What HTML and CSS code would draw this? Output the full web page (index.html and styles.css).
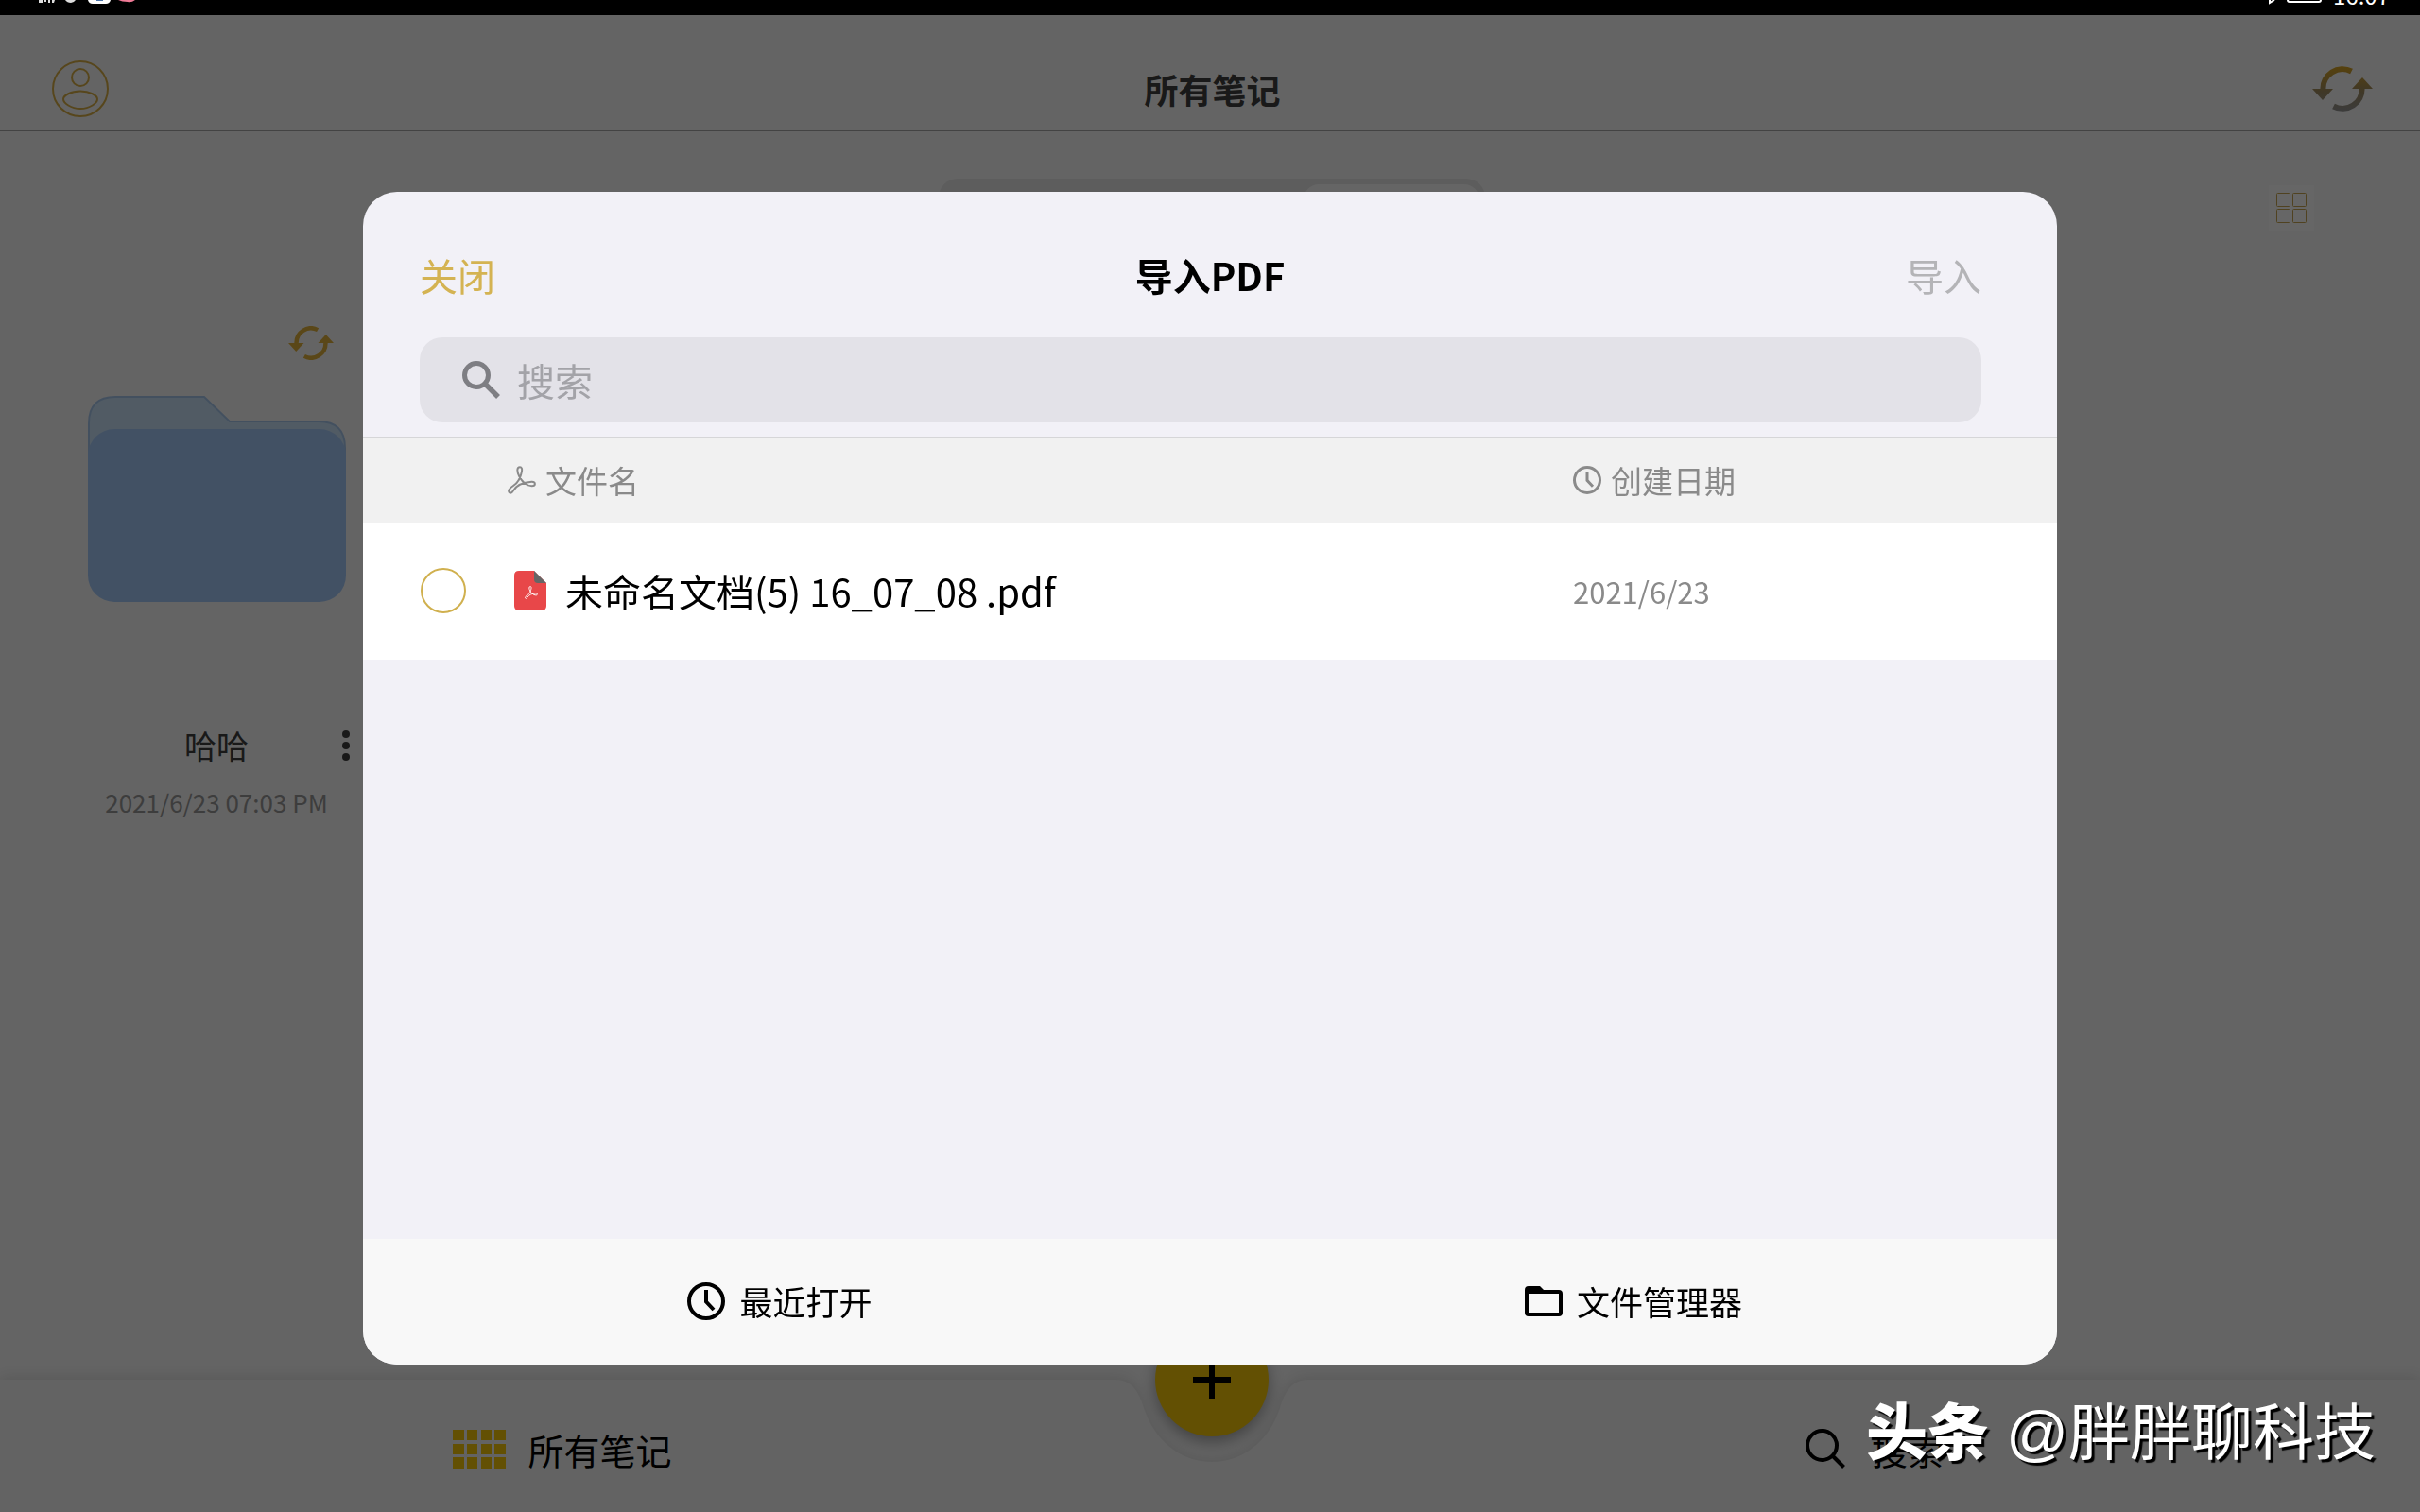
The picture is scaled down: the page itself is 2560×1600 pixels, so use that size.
FILE: index.html
```
<!DOCTYPE html>
<html lang="zh-CN">
<head>
<meta charset="utf-8">
<meta name="viewport" content="width=device-width, initial-scale=1">
<title>所有笔记</title>
<link rel="stylesheet" href="styles.css">
</head>
<body>
<svg class="defs" aria-hidden="true">
  <defs>
    <linearGradient id="sync-fade" gradientUnits="userSpaceOnUse" x1="0" y1="0" x2="0" y2="48">
      <stop offset="0" stop-color="#d9a420"/>
      <stop offset="0.55" stop-color="#a08c60"/>
      <stop offset="1" stop-color="#969696"/>
    </linearGradient>
    <symbol id="sync" viewBox="0 0 64 48">
      <path d="M41.500 5.500A20.500 20.500 0 0 0 11.500 25" fill="none" stroke-width="6"/>
      <path d="M22.500 42.500A20.500 20.500 0 0 0 52.500 23" fill="none" stroke-width="6"/>
      <path d="M0 24H22L11 36Z" stroke="none"/>
      <path d="M42 24H64L53 12Z" stroke="none"/>
    </symbol>
    <symbol id="clock" viewBox="0 0 40 40">
      <circle cx="20" cy="20" r="18" fill="none" stroke="currentColor" stroke-width="4"/>
      <path d="M20 8V20.500L28 29" fill="none" stroke="currentColor" stroke-width="4"/>
    </symbol>
    <symbol id="acrobat" viewBox="0 0 30 30">
      <path d="M13 1.200C9.500 1.200 9.800 6 12 10.500C14.500 16 20 21.200 25.500 21.200C30 21.200 30 16.500 25.500 16.800C17 17.300 9.500 20 5.800 26.500C3.500 30.500-0.500 28 1.800 24.800C5 20.500 9.500 20.500 12.500 13.500C14.500 9 17 1.200 13 1.200Z" fill="none" stroke="currentColor" stroke-width="2"/>
    </symbol>
  </defs>
</svg>

<div class="app">
  <div class="status">
    <svg class="status-left" width="104" height="5" viewBox="0 0 104 5" aria-hidden="true">
      <path d="M0 0H4V3H0ZM6 0H8V2H6ZM10 0H12V3H10ZM14 0H17L16 3H14Z" fill="#ddd"/>
      <path d="M28 0H39Q37 3 34 3Q30 3 28 0Z" fill="#ddd"/>
      <path d="M52 0H76Q75 4 71 4H57Q53 4 52 0Z" fill="#fff"/>
      <path d="M61 0H68V1H61Z" fill="#4a72a8"/>
      <path d="M84 0H102Q98 3 94 2Q88 2 84 0Z" fill="#f07a96"/>
    </svg>
    <div class="status-right">
      <svg width="56" height="12" viewBox="0 0 56 12" aria-hidden="true">
        <path d="M1 0V3L6 0" fill="none" stroke="#fff" stroke-width="2"/>
        <path d="M20 0Q20 2 22 2H53Q55 2 55 0" fill="none" stroke="#fff" stroke-width="2"/>
      </svg>
      <span class="time">16:07</span>
    </div>
  </div>

  <header class="topbar">
    <button class="icon-btn" aria-label="账户">
      <svg width="60" height="60" viewBox="0 0 60 60" fill="none" stroke="#d9b048" stroke-width="2">
        <circle cx="30" cy="30" r="29"/>
        <circle cx="30" cy="18" r="9"/>
        <path d="M12 41C12 37 20 32.500 30 32.500S48 37 48 41S40 51 30 51S12 45 12 41Z"/>
      </svg>
    </button>
    <h1>所有笔记</h1>
    <button class="icon-btn end" aria-label="同步">
      <svg width="64" height="48" fill="url(#sync-fade)" stroke="url(#sync-fade)"><use href="#sync"/></svg>
    </button>
  </header>

  <main class="content">
    <div class="toolbar">
      <div class="segment"><span class="segment-on"></span></div>
      <button class="view-btn" aria-label="网格">
        <svg width="32" height="32" viewBox="0 0 32 32" fill="none" stroke="#c9a650" stroke-width="1">
          <rect x="0.500" y="0.500" width="14" height="14" rx="1"/>
          <rect x="17.500" y="0.500" width="14" height="14" rx="1"/>
          <rect x="0.500" y="17.500" width="14" height="14" rx="1"/>
          <rect x="17.500" y="17.500" width="14" height="14" rx="1"/>
        </svg>
      </button>
    </div>
    <article class="card">
      <svg class="card-sync" width="48" height="36" fill="#e2b23c" stroke="#e2b23c"><use href="#sync"/></svg>
      <svg class="folder" width="273" height="218" viewBox="0 0 273 218">
        <path d="M1 60V29Q1 1 29 1H123L150 27H244Q272 27 272 55V80H1Z" fill="#cae4fb" stroke="#a9c9ee" stroke-width="2"/>
        <rect x="0" y="35" width="273" height="183" rx="28" fill="#a6cbfb"/>
      </svg>
      <div class="card-name">
        <h2>哈哈</h2>
        <button class="icon-btn end" aria-label="更多">
          <svg width="8" height="32" viewBox="0 0 8 32" fill="#404040"><circle cx="4" cy="4" r="4"/><circle cx="4" cy="16" r="4"/><circle cx="4" cy="28" r="4"/></svg>
        </button>
      </div>
      <p class="card-date">2021/6/23 07:03 PM</p>
    </article>
  </main>

  <nav class="tabbar">
    <div class="tabbar-bg">
      <span class="shelf-start"></span>
      <svg width="220" height="140" viewBox="0 0 220 140"><path d="M0 0H8C26 0 33 14 38 30C50 66 78 87 110 87S170 66 182 30C187 14 194 0 212 0H220V140H0Z" fill="#f8f8f8"/></svg>
      <span></span>
    </div>
    <a class="tab" href="#notes">
      <svg width="56" height="41" viewBox="0 0 56 41" fill="#f7c908">
        <path d="M0 0h12v11H0zM15 0h11v11H15zM30 0h11v11H30zM44 0h12v11H44zM0 15h12v11H0zM15 15h11v11H15zM30 15h11v11H30zM44 15h12v11H44zM0 29h12v12H0zM15 29h11v12H15zM30 29h11v12H30zM44 29h12v12H44z"/>
      </svg>
      <span>所有笔记</span>
    </a>
    <button class="fab" aria-label="新建">
      <svg width="40" height="40" viewBox="0 0 40 40"><path d="M20 0V40M0 20H40" stroke="#000" stroke-width="6"/></svg>
    </button>
    <a class="tab tab-search" href="#search">
      <svg width="42" height="42" viewBox="0 0 42 42" fill="none" stroke="#000" stroke-width="4">
        <circle cx="17.500" cy="17.500" r="15.500"/><path d="M28 28L40.500 40.500"/>
      </svg>
      <span>搜索</span>
    </a>
  </nav>
</div>

<div class="backdrop">
  <section class="dialog" role="dialog" aria-labelledby="dialog-title">
    <header class="dialog-head">
      <button class="text-btn close">关闭</button>
      <h2 id="dialog-title">导入PDF</h2>
      <button class="text-btn import" disabled>导入</button>
    </header>
    <label class="search">
      <svg width="40" height="40" viewBox="0 0 40 40" fill="none" stroke="#7e7e83" stroke-width="5">
        <circle cx="15" cy="15" r="12.500"/><path d="M25 25L38 38" stroke-width="5.500"/>
      </svg>
      <input type="search" placeholder="搜索" aria-label="搜索">
    </label>
    <table class="files">
      <thead>
        <tr>
          <th class="col-pick"></th>
          <th><span class="cell cell-head"><svg width="30" height="30"><use href="#acrobat"/></svg>文件名</span></th>
          <th class="col-date"><span class="cell cell-head"><svg width="30" height="30"><use href="#clock"/></svg>创建日期</span></th>
        </tr>
      </thead>
      <tbody>
        <tr>
          <td class="col-pick"><input id="file-1" class="pick" type="checkbox"></td>
          <td>
            <label class="cell cell-file" for="file-1">
              <svg width="34" height="42" viewBox="0 0 34 42">
                <path d="M5 0H21L34 13V37Q34 42 29 42H5Q0 42 0 37V5Q0 0 5 0Z" fill="#e84749"/>
                <path d="M21 0L34 13H25Q21 13 21 9Z" fill="#666"/>
                <svg class="mark" x="11" y="16" width="14" height="14"><use href="#acrobat"/></svg>
              </svg>
              未命名文档(5) 16_07_08 .pdf
            </label>
          </td>
          <td class="col-date date">2021/6/23</td>
        </tr>
      </tbody>
    </table>
    <footer class="dialog-foot">
      <button class="source source-recent"><svg width="40" height="40"><use href="#clock"/></svg>最近打开</button>
      <button class="source">
        <svg width="40" height="32" viewBox="0 0 40 32"><path d="M4 0H16L20 4H36Q40 4 40 8V28Q40 32 36 32H4Q0 32 0 28V4Q0 0 4 0ZM4 8V28H36V8Z" fill="#000"/></svg>
        文件管理器
      </button>
    </footer>
  </section>
</div>

<p class="watermark"><strong>头条</strong> @胖胖聊科技</p>
</body>
</html>
```
FILE: styles.css
```
* {
  box-sizing: border-box;
}

body {
  margin: 0;
  background: #fafafa;
  color: #000;
  font-family: "Noto Sans CJK SC", sans-serif;
}

h1, h2, p {
  margin: 0;
}

svg {
  display: block;
  flex: none;
}

button {
  padding: 0;
  border: 0;
  background: none;
  color: inherit;
  font: inherit;
}

a {
  color: inherit;
  text-decoration: none;
}

.defs {
  position: absolute;
  width: 0;
  height: 0;
}

.app {
  display: flex;
  flex-direction: column;
  min-height: 100vh;
}

/* status strip */
.status {
  position: relative;
  z-index: 2;
  display: flex;
  justify-content: space-between;
  height: 16px;
  padding: 0 32px 0 41px;
  overflow: hidden;
  background: #000;
  color: #fff;
}

.status-right {
  display: flex;
  align-items: flex-end;
  gap: 12px;
  padding-bottom: 7px;
}

.status-right svg {
  align-self: flex-start;
}

.time {
  font-size: 24px;
  line-height: 28px;
}

/* top bar */
.topbar {
  display: grid;
  grid-template-columns: 1fr auto 1fr;
  align-items: center;
  height: 123px;
  padding: 34px 50px 0 55px;
  border-bottom: 1px solid #a8a8a8;
}

.topbar h1 {
  color: #404040;
  font-size: 36px;
  line-height: 48px;
}

.icon-btn {
  justify-self: start;
}

.end {
  justify-self: end;
}

/* notes area */
.content {
  flex: 1;
  padding-top: 50px;
}

.toolbar {
  display: grid;
  grid-template-columns: 1fr 578px 1fr;
  align-items: center;
  padding-right: 112px;
  padding-left: 116px;
}

.segment {
  grid-column: 2;
  display: flex;
  justify-content: flex-end;
  height: 62px;
  padding: 6px;
  border-radius: 20px;
  background: #e8e8e8;
}

.segment-on {
  width: 186px;
  border-radius: 16px;
  background: #fcfcfc;
}

.view-btn {
  justify-self: end;
  padding: 8px;
  background: #ffffff;
}

.card {
  display: flex;
  flex-direction: column;
  align-items: center;
  width: 300px;
  margin: 94px 0 0 79px;
}

.card-sync {
  align-self: flex-end;
  margin: 0 26px 38px 0;
}

.card-name {
  display: grid;
  grid-template-columns: 1fr auto 1fr;
  align-items: center;
  align-self: stretch;
  margin-top: 128px;
  padding: 0 9px;
}

.card-name h2 {
  grid-column: 2;
  color: #404040;
  font-size: 34px;
  font-weight: 400;
  line-height: 48px;
}

.card-date {
  margin-top: 18px;
  color: #999;
  font-size: 26px;
  line-height: 36px;
}

/* bottom tabs */
.tabbar {
  position: relative;
  display: grid;
  grid-template-columns: 1fr 192px 1fr;
  justify-items: center;
  height: 140px;
  padding-left: 4px;
}

.tabbar-bg {
  position: absolute;
  inset: 0;
  display: flex;
  filter: drop-shadow(0 -2px 8px rgba(0, 0, 0, 0.12));
}

.tabbar-bg span {
  flex: 1;
  background: #f8f8f8;
}

.tabbar-bg .shelf-start {
  padding-left: 4px;
}

.tab {
  position: relative;
  display: flex;
  align-items: center;
  gap: 23px;
  height: 146px;
  font-size: 38px;
}

.tab-search {
  gap: 28px;
  padding-left: 28px;
}

.fab {
  position: relative;
  display: grid;
  place-items: center;
  width: 120px;
  height: 120px;
  margin-top: -60px;
  border-radius: 50%;
  background: #f7c908;
  box-shadow: 0 6px 16px rgba(0, 0, 0, 0.35);
}

/* import dialog */
.backdrop {
  position: fixed;
  inset: 0;
  z-index: 1;
  display: flex;
  padding: 203px 15% 156px;
  background: rgba(0, 0, 0, 0.6);
}

.dialog {
  display: flex;
  flex: 1;
  flex-direction: column;
  overflow: hidden;
  border-radius: 36px;
  background: #f2f1f7;
}

.dialog-head {
  display: grid;
  grid-template-columns: 1fr auto 1fr;
  align-items: center;
  padding: 58px 80px 36px 60px;
  font-size: 40px;
  line-height: 60px;
}

.dialog-head h2 {
  padding-left: 20px;
  font-size: 40px;
}

.close {
  justify-self: start;
  color: #d4b352;
}

.import {
  justify-self: end;
  color: #b4b4b7;
}

.search {
  display: flex;
  align-items: center;
  gap: 18px;
  height: 90px;
  margin: 0 80px 15px 60px;
  padding: 0 45px;
  border-radius: 24px;
  background: #e3e2e8;
}

.search input {
  flex: 1;
  padding: 0;
  border: 0;
  outline: 0;
  background: none;
  font: inherit;
  font-size: 40px;
}

.search input::placeholder {
  color: #a3a3a8;
}

.files {
  width: 100%;
  border-collapse: collapse;
  table-layout: fixed;
  border-top: 1px solid #d6d6d8;
}

.files th,
.files td {
  padding: 0;
  text-align: left;
  vertical-align: middle;
}

.files th {
  height: 90px;
  background: #f1f1f1;
  color: #8a8a8a;
  font-size: 33px;
  font-weight: 400;
}

.files td {
  height: 145px;
  background: #fff;
}

.files .col-pick {
  width: 153px;
  padding-left: 61px;
}

.files .col-date {
  width: 512px;
}

.files .date {
  color: #8a8a8a;
  font-size: 31px;
}

.cell {
  display: flex;
  align-items: center;
}

.cell-head {
  gap: 10px;
}

.cell-file {
  gap: 20px;
  padding-left: 7px;
  font-size: 40px;
}

.mark {
  color: #fff;
}

.pick {
  display: block;
  width: 48px;
  height: 48px;
  margin: 0;
  border: 2px solid #d0b04e;
  border-radius: 50%;
  appearance: none;
}

.dialog-foot {
  display: grid;
  grid-template-columns: 1fr 1fr;
  height: 133px;
  margin-top: auto;
  padding-bottom: 2px;
  background: #f8f8f8;
}

.source {
  display: flex;
  align-items: center;
  justify-content: center;
  gap: 15px;
  font-size: 35px;
}

.source-recent {
  padding-right: 14px;
}

/* author mark */
.watermark {
  position: fixed;
  right: 47px;
  bottom: 35px;
  z-index: 3;
  color: #fff;
  font-family: "Liberation Sans", "Noto Sans CJK SC", sans-serif;
  font-size: 65px;
  line-height: 96px;
  text-shadow: 3px 3px 1px #000;
}

.watermark strong {
  font-weight: 900;
}
```
